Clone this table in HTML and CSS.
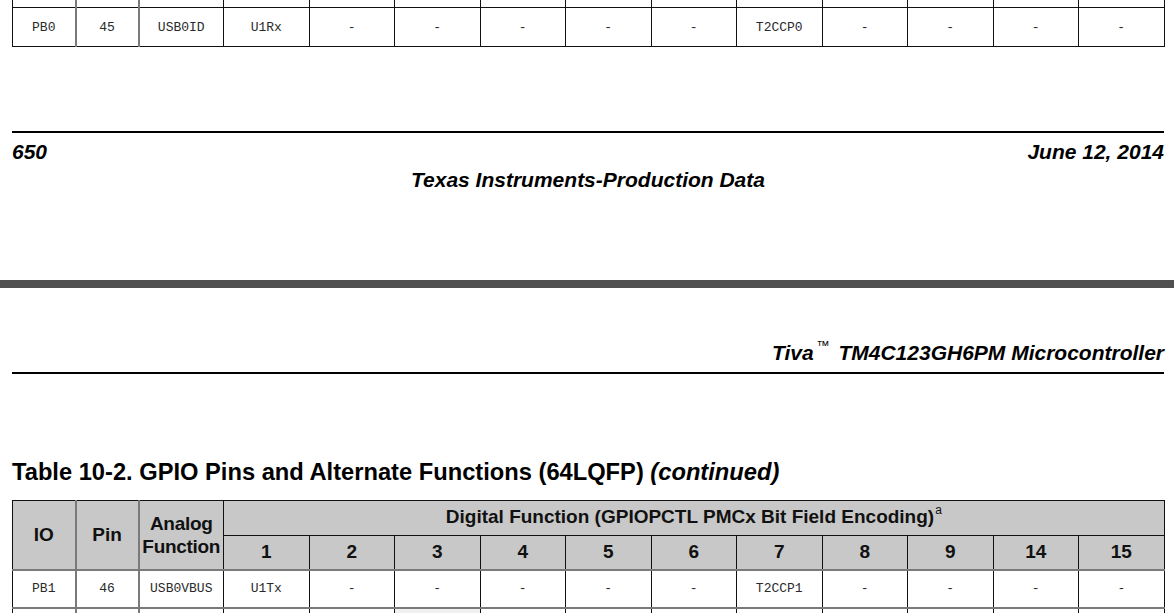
FILE: index.html
```html
<!DOCTYPE html>
<html>
<head>
<meta charset="utf-8">
<link rel="stylesheet" href="styles.css">
</head>
<body>
<div class="page">
  <div class="top-wrap">
    <table class="grid top-grid">
      <colgroup>
        <col class="c-io"><col class="c-pin"><col class="c-an">
        <col class="c-d"><col class="c-d"><col class="c-d"><col class="c-d"><col class="c-d"><col class="c-d"><col class="c-d"><col class="c-d"><col class="c-d"><col class="c-d"><col class="c-d">
      </colgroup>
      <tr class="data-row">
        <td class="g"></td><td class="g"></td><td></td><td></td><td></td><td></td><td></td><td></td><td></td><td></td><td></td><td></td><td></td><td></td>
      </tr>
      <tr class="data-row">
        <td class="g mono">PB0</td><td class="g mono">45</td><td class="mono">USB0ID</td><td class="mono">U1Rx</td>
        <td class="mono">-</td><td class="mono">-</td><td class="mono">-</td><td class="mono">-</td><td class="mono">-</td>
        <td class="mono">T2CCP0</td><td class="mono">-</td><td class="mono">-</td><td class="mono">-</td><td class="mono">-</td>
      </tr>
    </table>
  </div>

  <div class="footer">
    <div class="footer-row">
      <span class="bi">650</span>
      <span class="bi">June 12, 2014</span>
    </div>
    <div class="footer-center bi">Texas Instruments-Production Data</div>
  </div>

  <div class="page-break"></div>

  <div class="header">
    <span class="bi">Tiva<sup class="tm">™</sup> TM4C123GH6PM Microcontroller</span>
  </div>

  <h2 class="table-title">Table 10-2. GPIO Pins and Alternate Functions (64LQFP) <em>(continued)</em></h2>

  <div class="bottom-wrap">
    <table class="grid main-grid">
      <colgroup>
        <col class="c-io"><col class="c-pin"><col class="c-an">
        <col class="c-d"><col class="c-d"><col class="c-d"><col class="c-d"><col class="c-d"><col class="c-d"><col class="c-d"><col class="c-d"><col class="c-d"><col class="c-d"><col class="c-d">
      </colgroup>
      <tr class="head1">
        <th rowspan="2" class="g">IO</th>
        <th rowspan="2" class="g">Pin</th>
        <th rowspan="2" class="an-head">Analog<br>Function</th>
        <th colspan="11" class="span-head">Digital Function (GPIOPCTL PMCx Bit Field Encoding)<sup class="fn">a</sup></th>
      </tr>
      <tr class="head2">
        <th>1</th><th>2</th><th>3</th><th>4</th><th>5</th><th>6</th><th>7</th><th>8</th><th>9</th><th>14</th><th>15</th>
      </tr>
      <tr class="data-row first-data">
        <td class="g mono">PB1</td><td class="g mono">46</td><td class="mono">USB0VBUS</td><td class="mono">U1Tx</td>
        <td class="mono">-</td><td class="mono">-</td><td class="mono">-</td><td class="mono">-</td><td class="mono">-</td>
        <td class="mono">T2CCP1</td><td class="mono">-</td><td class="mono">-</td><td class="mono">-</td><td class="mono">-</td>
      </tr>
      <tr class="data-row next-row">
        <td class="g"></td><td class="g"></td><td></td><td></td><td></td><td class="shade"></td><td></td><td></td><td></td><td></td><td></td><td></td><td></td><td></td>
      </tr>
    </table>
  </div>
</div>
</body>
</html>
```

FILE: styles.css
```css
html, body {
  margin: 0;
  padding: 0;
  background: #ffffff;
  overflow: hidden;
}

.page {
  width: 1174px;
  height: 613px;
  overflow: hidden;
  font-family: "Liberation Sans", Arial, sans-serif;
  color: #000;
}

.bi {
  font-weight: bold;
  font-style: italic;
}

/* tables */
.grid {
  border-collapse: collapse;
  table-layout: fixed;
  width: 1152px;
  margin-left: 12px;
}

.c-io { width: 63px; }
.c-pin { width: 63px; }
.c-an { width: 85px; }
.c-d { width: 85.5px; }

.grid td, .grid th {
  border: 1px solid #111;
  padding: 0;
  text-align: center;
  vertical-align: middle;
}

.grid .g {
  border-right: 2px solid #7a7a7a;
}

.mono {
  font-family: "Liberation Mono", "Courier New", monospace;
  font-size: 13px;
  color: #2a2a2a;
}

.top-wrap {
  height: 47px;
  overflow: hidden;
}

.top-grid {
  margin-top: -32px;
}

.data-row {
  height: 39px;
}

/* footer */
.footer {
  margin: 84px 10px 0 12px;
  border-top: 2px solid #000;
  padding-top: 7px;
}

.footer-row {
  display: flex;
  justify-content: space-between;
  font-size: 21px;
  line-height: 24px;
}

.footer-center {
  text-align: center;
  font-size: 21px;
  line-height: 24px;
  margin-top: 4px;
}

.page-break {
  margin-top: 88px;
  height: 8px;
  background: #505050;
}

.header {
  margin: 53px 10px 0 12px;
  border-bottom: 2px solid #000;
  padding-bottom: 7px;
  text-align: right;
  font-size: 21px;
  line-height: 24px;
}

.tm {
  font-size: 13px;
  font-weight: normal;
  font-style: normal;
  vertical-align: 10px;
  line-height: 0;
  margin-left: 3px;
  margin-right: 3px;
}

.table-title {
  margin: 85px 0 0 12px;
  font-size: 23.7px;
  line-height: 27px;
  font-weight: bold;
}

.table-title em {
  font-style: italic;
}

.bottom-wrap {
  margin-top: 14px;
}

.main-grid th {
  background: #c8c8c8;
  font-weight: bold;
  font-size: 19px;
  color: #111;
}

.head1 {
  height: 35px;
}

.head1 .span-head {
  padding-bottom: 3px;
}

.head2 {
  height: 34px;
}

.an-head {
  line-height: 23px;
  padding-bottom: 3px;
  letter-spacing: -0.3px;
}

.fn {
  font-size: 12px;
  font-weight: normal;
  vertical-align: 9px;
  line-height: 0;
  margin-left: 1px;
}

.main-grid .head2 th,
.main-grid .head1 .g,
.main-grid .head1 .an-head {
  border-bottom: 2px solid #7a7a7a;
}

.first-data {
  height: 38px;
}

.first-data td {
  border-bottom: 2px solid #7a7a7a;
}

.shade {
  background: #f0f0f0;
}
```
